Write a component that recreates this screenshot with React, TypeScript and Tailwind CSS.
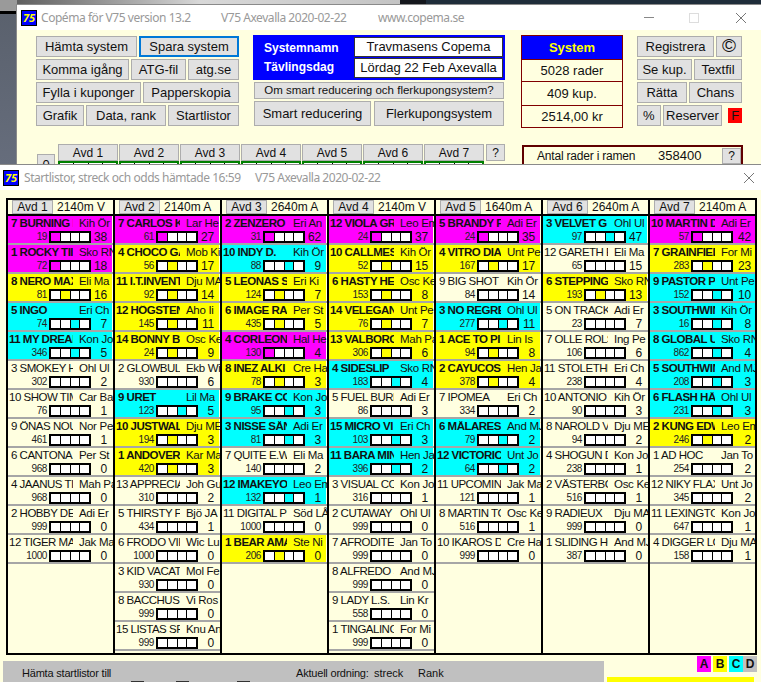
import React from "react";

type Cls = "A" | "B" | "C" | "D";
type Horse = [string, string, number, number, Cls];

const sans = "font-['Liberation_Sans',Arial,sans-serif]";

const divisions: { label: string; dist: string; horses: Horse[] }[] = [
  {
    label: "Avd 1",
    dist: "2140m V",
    horses: [
      ["7 BURNING MAN", "Kih Ör", 19, 38, "A"],
      ["1 ROCKY TIII", "Sko RN", 72, 18, "A"],
      ["8 NERO MAX", "Eli Ma", 81, 16, "B"],
      ["5 INGO", "Eri Ch", 74, 7, "C"],
      ["11 MY DREAM", "Kon Jo", 346, 5, "C"],
      ["3 SMOKEY H", "Ohl Ul", 302, 2, "D"],
      ["10 SHOW TIME", "Car Ba", 76, 1, "D"],
      ["9 ÖNAS NOUI", "Nor Pe", 461, 1, "D"],
      ["6 CANTONA", "Per St", 968, 0, "D"],
      ["4 JAANUS TI", "Mah Pa", 968, 0, "D"],
      ["2 HOBBY DE", "Adi Er", 999, 0, "D"],
      ["12 TIGER MAI", "Jak Ma", 1000, 0, "D"],
    ],
  },
  {
    label: "Avd 2",
    dist: "2140m A",
    horses: [
      ["7 CARLOS K", "Lar He", 61, 27, "A"],
      ["4 CHOCO GA", "Mob Ki", 56, 17, "B"],
      ["11 I.T.INVENT", "Dju MA", 92, 14, "B"],
      ["12 HÖGSTEN", "Aho Ii", 145, 11, "B"],
      ["14 BONNY BO", "Osc Ke", 24, 9, "B"],
      ["2 GLOWBUL", "Ekb Wi", 930, 6, "D"],
      ["9 URET", "Lil Ma", 123, 5, "C"],
      ["10 JUSTWAL", "Dju ME", 194, 3, "B"],
      ["1 ANDOVER", "Kar Ma", 420, 3, "B"],
      ["13 APPRECIAT", "Joh Gu", 310, 2, "D"],
      ["5 THIRSTY F", "Bjö JA", 434, 1, "D"],
      ["6 FRODO VIF", "Wic Lu", 1000, 0, "D"],
      ["3 KID VACAT", "Mol Fe", 930, 0, "D"],
      ["8 BACCHUS", "Vi Ros", 999, 0, "D"],
      ["15 LISTAS SP", "Knu An", 999, 0, "D"],
    ],
  },
  {
    label: "Avd 3",
    dist: "2640m A",
    horses: [
      ["2 ZENZERO .", "Eri An", 31, 62, "A"],
      ["10 INDY D.", "Kih Ör", 88, 9, "C"],
      ["5 LEONAS S", "Eri Ki", 124, 7, "B"],
      ["6 IMAGE RA", "Per St", 435, 5, "B"],
      ["4 CORLEONI", "Hal He", 130, 4, "A"],
      ["8 INEZ ALKI", "Cre Ha", 78, 3, "B"],
      ["9 BRAKE CO", "Kon Jo", 95, 3, "C"],
      ["3 NISSE SÅN", "Adi Er", 81, 3, "C"],
      ["7 QUITE E.W", "Eli Ma", 140, 2, "D"],
      ["12 IMAKEYO", "Leo Em", 132, 1, "C"],
      ["11 DIGITAL PF", "Söd LÅ", 1000, 0, "D"],
      ["1 BEAR AMA", "Ste Ni", 206, 0, "B"],
    ],
  },
  {
    label: "Avd 4",
    dist: "2140m V",
    horses: [
      ["12 VIOLA GR", "Leo Em", 24, 37, "A"],
      ["10 CALLMES", "Kih Ör", 52, 15, "B"],
      ["6 HASTY HE", "Osc Ke", 153, 8, "B"],
      ["14 VELEGAN", "Unt Pe", 76, 7, "B"],
      ["13 VALBORG", "Mah Pa", 306, 6, "B"],
      ["4 SIDESLIP", "Sko RN", 183, 4, "C"],
      ["5 FUEL BURN", "Adi Er", 86, 3, "D"],
      ["15 MICRO VI", "Eri Ch", 103, 3, "C"],
      ["11 BARA MIN", "Hen Ja", 396, 2, "C"],
      ["3 VISUAL CC", "Kon Jo", 316, 1, "D"],
      ["2 CUTAWAY", "Ohl Ul", 999, 0, "D"],
      ["7 AFRODITE", "Jan To", 999, 0, "D"],
      ["8 ALFREDO S", "And MJ", 999, 0, "D"],
      ["9 LADY L.S.", "Lin Kr", 558, 0, "D"],
      ["1 TINGALING", "For Mi", 999, 0, "D"],
    ],
  },
  {
    label: "Avd 5",
    dist: "1640m A",
    horses: [
      ["5 BRANDY F", "Adi Er", 24, 35, "A"],
      ["4 VITRO DIA", "Unt Pe", 167, 17, "B"],
      ["9 BIG SHOT", "Kih Ör", 84, 14, "D"],
      ["3 NO REGRE", "Ohl Ul", 277, 11, "C"],
      ["1 ACE TO PI", "Lin Is", 94, 8, "B"],
      ["2 CAYUCOS", "Hen Ja", 378, 4, "B"],
      ["7 IPOMEA", "Eri Ch", 334, 2, "D"],
      ["6 MÅLARES", "And MJ", 79, 2, "C"],
      ["12 VICTORIC", "Unt Jo", 64, 2, "C"],
      ["11 UPCOMING", "Jak Ma", 121, 1, "D"],
      ["8 MARTIN TC", "Osc Ke", 516, 1, "D"],
      ["10 IKAROS D", "Cre Ha", 999, 0, "D"],
    ],
  },
  {
    label: "Avd 6",
    dist: "2640m A",
    horses: [
      ["3 VELVET G", "Ohl Ul", 97, 47, "C"],
      ["12 GARETH E", "Eli Ma", 65, 15, "D"],
      ["6 STEPPING", "Sko RN", 193, 13, "B"],
      ["5 ON TRACK", "Adi Er", 23, 7, "D"],
      ["7 OLLE ROLS", "Ing Pe", 106, 6, "D"],
      ["11 STOLETHE", "Eri Ch", 238, 4, "D"],
      ["10 ANTONIO", "Kih Ör", 90, 3, "D"],
      ["8 NAROLD V", "Dju ME", 94, 2, "D"],
      ["4 SHOGUN D", "Kon Jo", 238, 1, "D"],
      ["2 VÄSTERBC", "Osc Ke", 516, 1, "D"],
      ["9 RADIEUX", "Dju MA", 999, 0, "D"],
      ["1 SLIDING HC", "And MJ", 387, 0, "D"],
    ],
  },
  {
    label: "Avd 7",
    dist: "2140m A",
    horses: [
      ["10 MARTIN D", "Adi Er", 57, 42, "A"],
      ["7 GRAINFIEL", "For Mi", 283, 23, "B"],
      ["9 PASTOR P", "Unt Pe", 152, 10, "C"],
      ["3 SOUTHWIN", "Kih Ör", 16, 8, "C"],
      ["8 GLOBAL U", "Sko RN", 862, 4, "C"],
      ["5 SOUTHWIN", "And MJ", 208, 3, "C"],
      ["6 FLASH HÅ", "Ohl Ul", 231, 3, "C"],
      ["2 KUNG EDW", "Leo Em", 246, 2, "B"],
      ["1 AD HOC", "Jan To", 254, 2, "D"],
      ["12 NIKY FLAX", "Unt Jo", 345, 2, "D"],
      ["11 LEXINGTO", "Kon Jo", 647, 1, "D"],
      ["4 DIGGER LC", "Dju MA", 158, 1, "D"],
    ],
  },
];

const rowBg: Record<Cls, string> = {
  A: "bg-[#ff00ff] font-bold",
  B: "bg-[#ffff00] font-bold",
  C: "bg-[#00ffff] font-bold",
  D: "",
};

const Btn = ({ children, className = "" }: { children: React.ReactNode; className?: string }) => (
  <div className={`flex items-center justify-center bg-[#e1e1e1] border border-[#adadad] text-[#111] whitespace-nowrap ${className}`}>
    {children}
  </div>
);

const Logo = () => (
  <div className="w-[16px] h-[16px] bg-[#0000ff] border border-black flex items-center justify-center text-[#ffff00] font-bold italic text-[11px] leading-none shrink-0">
    75
  </div>
);

const CloseIcon = () => (
  <svg width="12" height="12" viewBox="0 0 12 12" stroke="#777" strokeWidth="1" fill="none">
    <path d="M1 1 L11 11 M11 1 L1 11" />
  </svg>
);

const Boxes = ({ cls }: { cls: Cls }) => {
  const fills = [
    cls === "A" ? "bg-[#ff00ff]" : "bg-white",
    cls === "B" ? "bg-[#ffff00]" : "bg-white",
    cls === "C" ? "bg-[#00ffff]" : "bg-white",
    "bg-white",
  ];
  return (
    <div className="flex ml-[2px] w-[42px] h-[12px] border-2 border-black shrink-0">
      {fills.map((f, i) => (
        <div key={i} className={`flex-1 ${i > 0 ? "border-l border-black" : ""} ${f}`} />
      ))}
    </div>
  );
};

const Row = ({ horse }: { horse: Horse }) => {
  const [name, driver, small, count, cls] = horse;
  const twoDigit = /^\d\d/.test(name);
  return (
    <div className="h-[29px] border-b-2 border-[#a6a6a6] overflow-hidden">
      <div className={`h-full mr-[1px] ${rowBg[cls]}`}>
        <div className="flex h-[15px] items-center text-[11.5px] leading-none text-[#111]">
          <div className={`w-[65px] tracking-[-0.5px] overflow-hidden whitespace-nowrap shrink-0 ${twoDigit ? "pl-[1px]" : "pl-[3px]"}`}>{name}</div>
          <div className="pl-[6px] tracking-[-0.3px] font-normal whitespace-nowrap">{driver}</div>
        </div>
        <div className="flex items-center h-[12px] font-normal">
          <div className="w-[39px] text-right text-[10px] tracking-[-0.4px] leading-none text-[#222] shrink-0">{small}</div>
          <Boxes cls={cls} />
          <div className="w-[14px] ml-auto mr-[5px] text-right text-[12px] leading-none text-[#111] tracking-[-0.2px]">{count}</div>
        </div>
      </div>
    </div>
  );
};

const Column = ({ label, dist, horses }: { label: string; dist: string; horses: Horse[] }) => (
  <div className="w-[107px] shrink-0 border-r-2 border-black last:border-r-0 flex flex-col">
    <div className="h-[14px] flex items-center border-b-2 border-black pl-[4px] box-content">
      <Btn className="w-[41px] h-[14px] text-[12px]">{label}</Btn>
      <div className="ml-[4px] text-[12px] text-[#111] whitespace-nowrap">{dist}</div>
    </div>
    {horses.map((h, i) => (
      <Row key={i} horse={h} />
    ))}
  </div>
);

const avds = ["Avd 1", "Avd 2", "Avd 3", "Avd 4", "Avd 5", "Avd 6", "Avd 7"];

export default function App() {
  return (
    <div className={`relative w-[761px] h-[682px] overflow-hidden bg-[#1f2d3a] ${sans}`}>
      {/* desktop behind the windows */}
      <div className="absolute left-0 top-0 w-[400px] h-[5px] bg-gradient-to-r from-[#555] via-[#d8d8d8] to-[#c4c4c4]" />
      <div className="absolute left-[400px] top-0 w-[26px] h-[5px] bg-[#14171c]" />
      <div className="absolute left-0 top-0 w-[17px] h-[165px] bg-gradient-to-b from-[#59606c] to-[#666d7c]">
        <div className="h-[11px] bg-[#9a9a9a]" />
        <div className="h-[3px] bg-black" />
      </div>

      {/* main window */}
      <div className="absolute left-[16px] top-[4px] w-[745px] h-[170px] border-l border-t border-[#8a8a8a] bg-[#ffffe0] overflow-hidden">
        <div className="h-[25px] bg-white flex items-center pl-[4px] text-[12px] text-[#999] font-['Noto_Sans',sans-serif]">
          <Logo />
          <span className="ml-[4px] w-[180px] tracking-[-0.45px] whitespace-nowrap">Copéma för V75 version 13.2</span>
          <span className="w-[157px] tracking-[-0.45px] whitespace-nowrap">V75 Axevalla 2020-02-22</span>
          <span className="tracking-[-0.45px] whitespace-nowrap">www.copema.se</span>
          <div className="ml-auto flex items-center mr-[14px]">
            <div className="w-[10px] h-px bg-[#888]" />
            <div className="w-[10px] h-[10px] border border-[#ddd] ml-[35px]" />
            <div className="ml-[36px]">
              <CloseIcon />
            </div>
          </div>
        </div>

        <div className="flex items-start pt-[5px] pl-[19px] text-[13px]">
          <div className="w-[203px] flex flex-col gap-[2px] pt-[1px]">
            <div className="flex gap-[2px]">
              <Btn className="w-[101px] h-[21px]">Hämta system</Btn>
              <Btn className="w-[100px] h-[21px] !border-2 !border-[#0078d7]">Spara system</Btn>
            </div>
            <div className="flex gap-[2px]">
              <Btn className="w-[93px] h-[21px]">Komma igång</Btn>
              <Btn className="w-[55px] h-[21px]">ATG-fil</Btn>
              <Btn className="w-[51px] h-[21px]">atg.se</Btn>
            </div>
            <div className="flex gap-[2px]">
              <Btn className="w-[105px] h-[21px]">Fylla i kuponger</Btn>
              <Btn className="w-[96px] h-[21px]">Papperskopia</Btn>
            </div>
            <div className="flex gap-[2px]">
              <Btn className="w-[48px] h-[21px]">Grafik</Btn>
              <Btn className="w-[80px] h-[21px]">Data, rank</Btn>
              <Btn className="w-[71px] h-[21px]">Startlistor</Btn>
            </div>
          </div>

          <div className="ml-[14px] w-[252px] flex flex-col">
            <div className="h-[45px] bg-[#0000ff] flex text-white font-bold text-[12px]">
              <div className="w-[101px] pl-[11px] flex flex-col justify-center gap-[1px]">
                <div>Systemnamn</div>
                <div>Tävlingsdag</div>
              </div>
              <div className="w-[149px] pt-[2px] flex flex-col gap-[1px] text-[#111] font-normal text-[13px]">
                <div className="h-[20px] bg-white border border-[#333] flex items-center justify-center">Travmasens Copema</div>
                <div className="h-[20px] bg-white border border-[#333] flex items-center justify-center whitespace-nowrap">Lördag 22 Feb Axevalla</div>
              </div>
            </div>
            <Btn className="ml-px mt-[2px] w-[250px] h-[17px] text-[11.5px]">Om smart reducering och flerkupongsystem?</Btn>
            <div className="flex gap-[3px] ml-px mt-[2px]">
              <Btn className="w-[117px] h-[25px]">Smart reducering</Btn>
              <Btn className="w-[130px] h-[25px]">Flerkupongsystem</Btn>
            </div>
          </div>

          <div className="ml-[16px] w-[102px] border border-[#800000] text-[#111] text-center">
            <div className="h-[23px] bg-[#0000ff] text-[#ffff00] font-bold flex items-center justify-center">System</div>
            <div className="h-[23px] border-b border-t border-[#800000] flex items-center justify-center">5028 rader</div>
            <div className="h-[24px] border-b border-[#800000] flex items-center justify-center">409 kup.</div>
            <div className="h-[21px] flex items-center justify-center">2514,00 kr</div>
          </div>

          <div className="ml-[14px] w-[105px] flex flex-col gap-[2px] pt-[1px]">
            <div className="flex gap-[2px]">
              <Btn className="w-[77px] h-[21px]">Registrera</Btn>
              <Btn className="w-[26px] h-[21px] text-[19px]">©</Btn>
            </div>
            <div className="flex gap-[2px]">
              <Btn className="w-[55px] h-[21px]">Se kup.</Btn>
              <Btn className="w-[48px] h-[21px]">Textfil</Btn>
            </div>
            <div className="flex gap-[2px]">
              <Btn className="w-[50px] h-[21px]">Rätta</Btn>
              <Btn className="w-[53px] h-[21px]">Chans</Btn>
            </div>
            <div className="flex items-center gap-[2px]">
              <Btn className="w-[24px] h-[21px]">%</Btn>
              <Btn className="w-[61px] h-[21px]">Reserver</Btn>
              <div className="ml-[4px] w-[14px] h-[15px] bg-[#ff0000] text-[#111] flex items-center justify-center">F</div>
            </div>
          </div>
        </div>

        <div className="flex items-start mt-[16px] pl-[20px] text-[13px]">
          <Btn className="mt-[10px] w-[18px] h-[22px] items-start">0</Btn>
          <div className="flex ml-[3px] gap-px">
            {avds.map((a) => (
              <div key={a} className="w-[60px]">
                <Btn className="h-[17px] text-[12px]">{a}</Btn>
                <div className="flex h-[14px] border-2 border-[#008000] bg-white text-[11px] leading-[12px] text-center text-[#111]">
                  <div className="flex-1 border-r border-black">A</div>
                  <div className="flex-1 border-r border-black">B</div>
                  <div className="flex-1 border-r border-black">C</div>
                  <div className="flex-1">D</div>
                </div>
              </div>
            ))}
          </div>
          <Btn className="ml-[2px] w-[19px] h-[17px] text-[12px]">?</Btn>
          <div className="ml-[17px] mt-[1px] w-[221px] h-[34px] border-2 border-[#600000] flex items-start pt-[1px] pl-[13px] text-[#111]">
            <span className="w-[121px] whitespace-nowrap text-[12px] tracking-[-0.2px] leading-[16px]">Antal rader i ramen</span>
            <span className="w-[64px] leading-[16px]">358400</span>
            <Btn className="w-[19px] h-[16px] text-[12px]">?</Btn>
          </div>
        </div>
      </div>

      {/* start list window */}
      <div className="absolute left-0 top-[164px] w-[761px] h-[518px] border-t border-[#8a8a8a] bg-[#ffffe0] overflow-hidden">
        <div className="h-[25px] bg-white flex items-center pl-[3px] text-[12px] text-[#999] font-['Noto_Sans',sans-serif]">
          <Logo />
          <span className="ml-[5px] w-[231px] tracking-[-0.45px] whitespace-nowrap">Startlistor, streck och odds hämtade 16:59</span>
          <span className="tracking-[-0.45px] whitespace-nowrap">V75 Axevalla 2020-02-22</span>
          <div className="ml-auto mr-[6px]">
            <CloseIcon />
          </div>
        </div>

        <div className="ml-[6px] mt-[8px] w-[751px] h-[457px] border-2 border-black flex overflow-hidden">
          {divisions.map((d) => (
            <Column key={d.label} label={d.label} dist={d.dist} horses={d.horses} />
          ))}
        </div>

        <div className="flex items-start justify-between text-[#111] text-[11px]">
          <div className="ml-[3px] mt-[6px] w-[601px] h-[40px] bg-[#c0c0c0] flex pt-[6px]">
            <div className="w-[293px] pl-[19px]">
              <div className="h-[12px] leading-[12px] tracking-[-0.2px]">Hämta startlistor till</div>
              <div className="flex items-center gap-[4px] ml-[109px]">
                <div className="w-[13px] h-[13px] border border-[#333] bg-white" />
                <span className="w-[24px]">Vinst</span>
                <div className="w-[13px] h-[13px] border border-[#333] bg-white" />
                <span className="w-[40px]">Bergsåker</span>
                <div className="w-[13px] h-[13px] border border-[#333] bg-white" />
                <span>Solvalla</span>
              </div>
            </div>
            <div className="whitespace-nowrap w-[78px] leading-[12px] tracking-[-0.2px]">Aktuell ordning:</div>
            <div className="w-[44px] leading-[12px]">streck</div>
            <div className="leading-[12px]">Rank</div>
          </div>
          <div className="flex flex-col items-end mr-[4px] pt-[1px]">
            <div className="flex gap-[2px] font-bold text-[12px]">
              <div className="w-[14px] h-[16px] bg-[#ff00ff] flex items-center justify-center">A</div>
              <div className="w-[14px] h-[16px] bg-[#ffff00] flex items-center justify-center">B</div>
              <div className="w-[14px] h-[16px] bg-[#00ffff] flex items-center justify-center">C</div>
              <div className="-ml-[2px] w-[14px] h-[16px] bg-[#c0c0c0] flex items-center justify-center">D</div>
            </div>
            <div className="mt-[5px] mr-[3px] w-[147px] h-[10px] bg-[#ffff00]" />
          </div>
        </div>
      </div>
    </div>
  );
}
